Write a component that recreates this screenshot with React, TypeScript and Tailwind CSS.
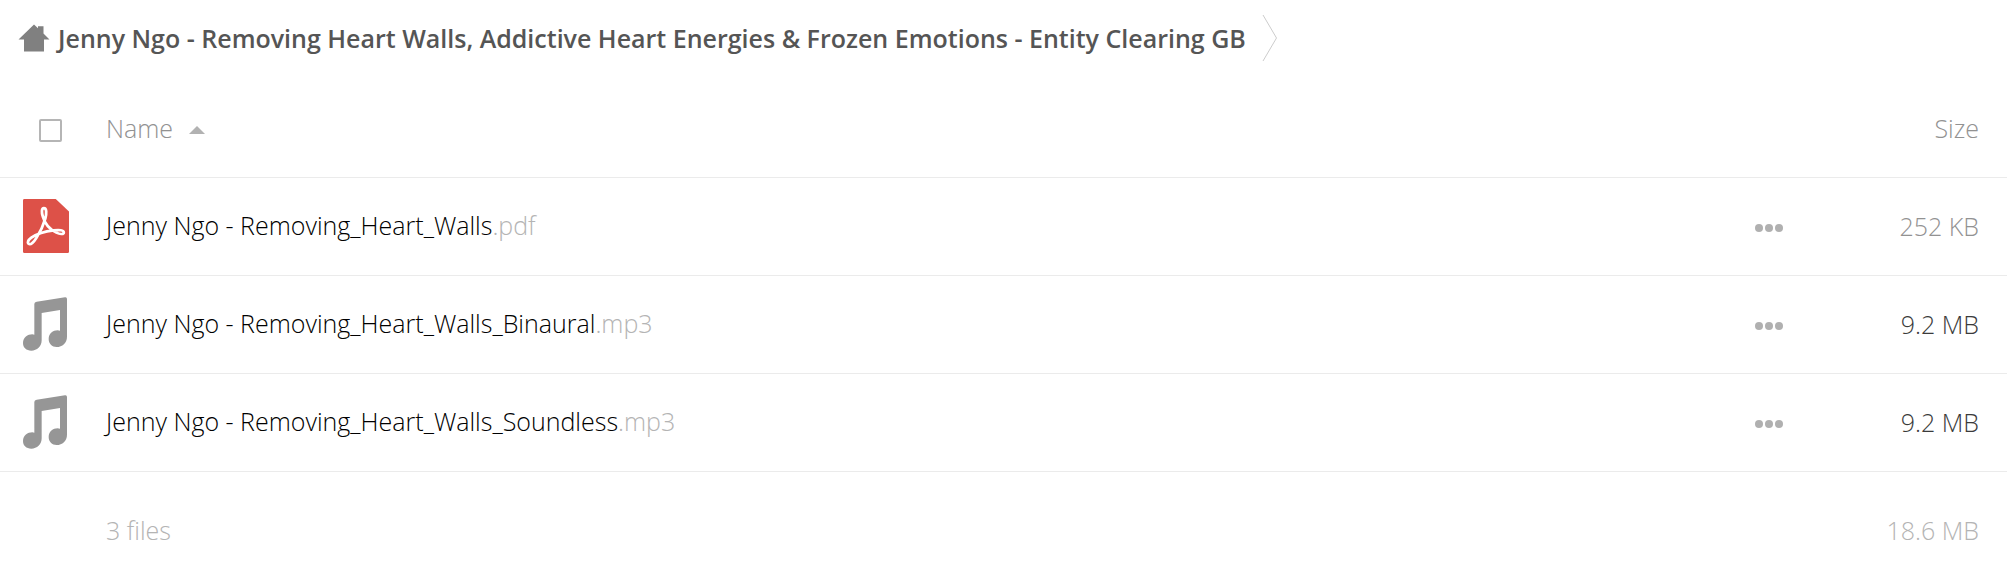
import { useState } from 'react';

interface FileEntry {
  name: string;
  ext: string;
  type: 'pdf' | 'audio';
  size: string;
  sizeColor: string;
}

const files: FileEntry[] = [
  { name: 'Jenny Ngo - Removing_Heart_Walls', ext: '.pdf', type: 'pdf', size: '252 KB', sizeColor: 'text-[#929292]' },
  { name: 'Jenny Ngo - Removing_Heart_Walls_Binaural', ext: '.mp3', type: 'audio', size: '9.2 MB', sizeColor: 'text-[#3b3b3b]' },
  { name: 'Jenny Ngo - Removing_Heart_Walls_Soundless', ext: '.mp3', type: 'audio', size: '9.2 MB', sizeColor: 'text-[#3b3b3b]' },
];

function HomeIcon() {
  return (
    <svg className="h-7 w-8" viewBox="0 0 32 28" fill="#808080" aria-hidden="true">
      <path d="M16 0.5 L20 4.2 V2.2 H25.5 V9.5 L31.5 15.6 H26 V27.5 H6 V15.6 H0.5 Z" />
    </svg>
  );
}

function PdfIcon() {
  return (
    <svg className="h-[54px] w-[46px]" viewBox="0 0 132 165" preserveAspectRatio="none" fill="none" aria-hidden="true">
      <path d="M4 0 H94 L132 38 V161 Q132 165 128 165 H4 Q0 165 0 161 V4 Q0 0 4 0 Z" fill="#dd5148" />
      <path
        d="M60 28 C53 28 53 42 57 54 C62 74 77 93 96 103 C107 109 117 108 117 102 C117 95 104 94 88 96 C64 99 38 108 24 118 C14 126 12 133 16 137 C22 142 31 132 39 118 C48 103 58 82 64 60 C68 43 68 28 60 28 Z"
        stroke="#fff"
        strokeWidth="8"
        strokeLinejoin="round"
      />
    </svg>
  );
}

function AudioIcon() {
  return (
    <svg className="h-[54px] w-11" viewBox="0 0 132 162" fill="#969696" aria-hidden="true">
      <path d="M41 14 L126 1 Q132 0 132 6 V119 C132 137 118 150 101 150 C87 150 77 140 77 126 C77 110 90 100 104 100 Q108 100 111 101 V39 L56 48 V130 C56 149 42 161 25 161 C10 161 0 152 0 138 C0 122 14 112 28 112 Q31 112 34 113 V21 Q34 15 41 14 Z" />
    </svg>
  );
}

export default function App() {
  const [ascending, setAscending] = useState(true);
  const [allSelected, setAllSelected] = useState(false);

  const rows = ascending ? files : [...files].reverse();

  return (
    <main className="min-h-screen bg-white font-['Open_Sans',sans-serif] text-[25px] leading-9 font-light">
      {/* Breadcrumb */}
      <nav aria-label="Breadcrumb" className="flex h-20 items-center pb-1 pl-[18px]">
        <a href="#home" className="flex items-center gap-2 font-semibold whitespace-nowrap text-[#555]">
          <HomeIcon />
          Jenny Ngo - Removing Heart Walls, Addictive Heart Energies &amp; Frozen Emotions - Entity Clearing GB
        </a>
        <svg className="ml-4 h-12 w-4 shrink-0" viewBox="0 0 16 48" fill="none" stroke="#cccccc" aria-hidden="true">
          <path d="M1 1 L14.5 24 L1 47" />
        </svg>
      </nav>

      {/* File list */}
      <table className="w-full table-fixed border-collapse">
        <thead>
          <tr className="h-[97px] border-b border-[#ebebeb] text-[#929292]">
            <th className="w-[106px] pl-[39px] text-left">
              <input
                type="checkbox"
                aria-label="Select all"
                checked={allSelected}
                onChange={(e) => setAllSelected(e.target.checked)}
                className="mt-1 block size-[23px] appearance-none rounded-xs border-2 border-[#b5b5b5] checked:bg-[#b5b5b5]"
              />
            </th>
            <th className="text-left font-light">
              <button onClick={() => setAscending(!ascending)} className="flex items-center gap-4">
                Name
                <svg className="mt-1 h-2 w-4" viewBox="0 0 16 8" fill="#b2b2b2" aria-hidden="true">
                  <path d={ascending ? 'M8 0 L16 8 H0 Z' : 'M0 0 H16 L8 8 Z'} />
                </svg>
              </button>
            </th>
            <th className="w-[60px]" />
            <th className="w-[208px] pr-7 text-right font-light">Size</th>
          </tr>
        </thead>
        <tbody>
          {rows.map((file) => (
            <tr key={file.name} className="h-[98px] border-b border-[#ebebeb]">
              <td className="pl-[23px]">{file.type === 'pdf' ? <PdfIcon /> : <AudioIcon />}</td>
              <td className="pb-0.5">
                <a href={`#${file.name}${file.ext}`} className="text-black">
                  {file.name}
                  <span className="text-[#b4b4b4]">{file.ext}</span>
                </a>
              </td>
              <td>
                <button aria-label={`Actions for ${file.name}`} className="mx-auto mt-1 block">
                  <svg className="h-2 w-7" viewBox="0 0 28 8" fill="#b0b0b0" aria-hidden="true">
                    <circle cx="4" cy="4" r="4" />
                    <circle cx="14" cy="4" r="4" />
                    <circle cx="24" cy="4" r="4" />
                  </svg>
                </button>
              </td>
              <td className={`pr-7 text-right ${file.sizeColor}`}>{file.size}</td>
            </tr>
          ))}
        </tbody>
        <tfoot>
          <tr className="h-[109px] text-[#b4b4b4]">
            <td />
            <td className="pt-2">3 files</td>
            <td />
            <td className="pt-2 pr-7 text-right">18.6 MB</td>
          </tr>
        </tfoot>
      </table>
    </main>
  );
}
